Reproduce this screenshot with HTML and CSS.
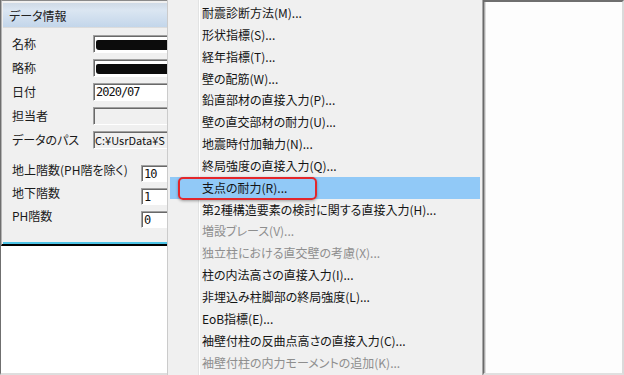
FILE: index.html
```html
<!DOCTYPE html>
<html lang="ja">
<head>
<meta charset="UTF-8">
<title>データ情報</title>
<link rel="stylesheet" href="styles.css">
</head>
<body>
<div class="screen">
  <div class="left">
    <div class="dialog">
      <div class="titlebar">データ情報</div>
      <div class="dlg-body">
        <div class="info">
          <label>名称</label>
          <div class="field white"><span class="redact"></span></div>
          <label>略称</label>
          <div class="field white"><span class="redact"></span></div>
          <label>日付</label>
          <div class="field white mono">2020/07</div>
          <label>担当者</label>
          <div class="field"></div>
          <label>データのパス</label>
          <div class="field path">C:¥UsrData¥S</div>
        </div>
        <div class="floors">
          <label>地上階数(PH階を除く)</label>
          <div class="field white mono">10</div>
          <label>地下階数</label>
          <div class="field white mono">1</div>
          <label>PH階数</label>
          <div class="field white mono">0</div>
        </div>
      </div>
    </div>
  </div>

  <ul class="menu">
    <li>耐震診断方法(M)...</li>
    <li>形状指標(S)...</li>
    <li>経年指標(T)...</li>
    <li>壁の配筋(W)...</li>
    <li>鉛直部材の直接入力(P)...</li>
    <li>壁の直交部材の耐力(U)...</li>
    <li>地震時付加軸力(N)...</li>
    <li>終局強度の直接入力(Q)...</li>
    <li class="active">支点の耐力(R)...<span class="mark"></span></li>
    <li>第2種構造要素の検討に関する直接入力(H)...</li>
    <li class="disabled">増設ブレース(V)...</li>
    <li class="disabled">独立柱における直交壁の考慮(X)...</li>
    <li>柱の内法高さの直接入力(I)...</li>
    <li>非埋込み柱脚部の終局強度(L)...</li>
    <li>EoB指標(E)...</li>
    <li>袖壁付柱の反曲点高さの直接入力(C)...</li>
    <li class="disabled">袖壁付柱の内力モーメントの追加(K)...</li>
  </ul>

  <div class="backdrop"></div>
</div>
</body>
</html>
```

FILE: styles.css
```css
* {
  box-sizing: border-box;
}
body {
  margin: 0;
  background: #fff;
  font-family: "Noto Sans CJK JP", "Noto Sans", sans-serif;
  font-size: 12px;
  color: #1a1a1a;
}
.screen {
  display: flex;
  width: 624px;
  height: 375px;
  overflow: hidden;
}

/* left window with the dialog */
.left {
  width: 167px;
  flex: none;
  border-left: 1px solid #6f6f6f;
  border-bottom: 2px solid #dedede;
  overflow: hidden;
}
.dialog {
  height: 246px;
  width: 240px;
  border-top: 1px solid #8a8a8a;
  border-left: 1px solid #b4b4b4;
  border-bottom: 2px solid #000;
  padding: 2px 0 0 1px;
  background: #f0f0f0;
  display: flex;
  flex-direction: column;
}
.titlebar {
  height: 25px;
  flex: none;
  line-height: 25px;
  padding-left: 6px;
  background: linear-gradient(#cfdae6, #dbe6f2 30%, #c3d6ea);
  border-bottom: 1px solid #dcdcdc;
  color: #222;
  font-feature-settings: "palt";
}
.dlg-body {
  flex: 1;
  padding: 7px 0 0 9px;
  border-bottom: 2px solid #4cc3e6;
  font-feature-settings: "palt";
}
.info {
  display: grid;
  grid-template-columns: 81px 140px;
  grid-auto-rows: 18px;
  row-gap: 6px;
}
.info label {
  line-height: 18px;
  white-space: nowrap;
}
.floors {
  margin-top: 16px;
  display: grid;
  grid-template-columns: 129px 80px;
  grid-auto-rows: 17px;
  row-gap: 6px;
}
.floors label {
  line-height: 12px;
  margin-top: -1px;
  white-space: nowrap;
}
.field {
  border: 1px solid;
  border-color: #a0a0a0 #fff #fff #a0a0a0;
  box-shadow: inset 1px 1px #696969;
  background: #f0f0f0;
  padding: 1px 0 0 2px;
  overflow: hidden;
  white-space: nowrap;
}
.field.white {
  background: #fff;
}
.mono {
  font-family: "DejaVu Sans Mono", monospace;
  font-size: 12px;
  letter-spacing: -1px;
  line-height: 14px;
  color: #111;
}
.path {
  font-size: 11px;
  line-height: 15px;
  padding-left: 1px;
  color: #111;
}
.redact {
  display: block;
  height: 10px;
  margin-top: 3px;
  background: #0c0c0c;
  border-radius: 2px 0 0 3px;
}

/* popup menu */
.menu {
  list-style: none;
  margin: 0;
  width: 316px;
  flex: none;
  padding: 2px 0 0;
  background-color: #f0f0f0;
  background-image: linear-gradient(90deg, transparent 30px, #e2e3e3 30px, #e2e3e3 31px, #fff 31px, #fff 32px, transparent 32px);
  border-left: 1px solid #cbcbcb;
  border-right: 1px solid #a8a8a8;
  font-feature-settings: "palt";
}
.menu li {
  position: relative;
  height: 21.85px;
  line-height: 21.85px;
  margin: 0 2px;
  padding-left: 32px;
  white-space: nowrap;
  color: #141414;
}
.menu li.disabled {
  color: #8e8e8e;
}
.menu li.active {
  background: #91c9f7;
}
.mark {
  position: absolute;
  left: 8px;
  top: 0;
  width: 139px;
  height: 23px;
  border: 2px solid #e3262b;
  border-radius: 5px;
  box-shadow: 0 1px 3px rgba(0, 0, 0, 0.35);
}

/* window behind the menu */
.backdrop {
  flex: 1;
  background: #fdfdfd;
  border-top: 2px solid #6f6f6f;
  border-left: 1px solid #6a6a6a;
  border-right: 2px solid #dadada;
  border-bottom: 2px solid #e0e0e0;
  box-shadow: inset 1px 0 #ababab, inset 2px 0 #dcdcdc;
}
```
